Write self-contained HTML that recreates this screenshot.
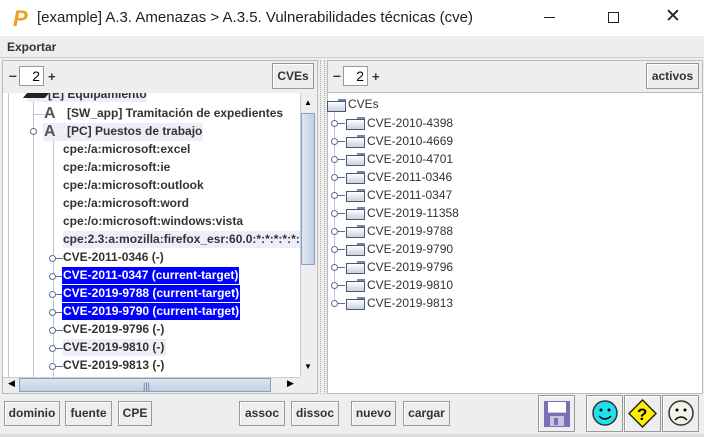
<!DOCTYPE html>
<html><head><meta charset="utf-8"><style>
*{margin:0;padding:0;box-sizing:border-box}
body{width:704px;height:437px;overflow:hidden;background:#eeeeee;font-family:"Liberation Sans",sans-serif;position:relative}
.a{position:absolute}
.t{font-size:12px;font-weight:bold;color:#333;white-space:nowrap;line-height:17px}
.btn{position:absolute;border:1px solid #999;background:#eee;font-size:12px;font-weight:bold;color:#333;text-align:center;line-height:22px;box-shadow:inset 1px 1px 0 #fff}
.sel{background:#0000ff;color:#fff;padding:0 1px}
.hl{background:#eeeef8}
.fold{position:absolute;width:19px;height:11px;border:1px solid #4a5a70;background:linear-gradient(#fff,#c8d2de)}
.fold:before{content:"";position:absolute;left:10px;top:-3px;width:8px;height:2px;background:#7088a8}
.k{position:absolute;width:7px;height:7px;border:1.5px solid #5a7090;border-radius:50%;background:#fff}
.kl{position:absolute;width:7px;height:1px;background:#5a7090}
</style></head><body>
<div class="a" style="left:0;top:0;width:704px;height:36px;background:#fff"></div>
<div class="a" style="left:13px;top:6px;font:bold italic 22px 'Liberation Sans';color:#f0a020">P</div>
<div class="a" style="left:37px;top:9px;font-size:15px;color:#222">[example] A.3. Amenazas &gt; A.3.5. Vulnerabilidades técnicas (cve)</div>
<div class="a" style="left:544px;top:17px;width:11px;height:1px;background:#222"></div>
<div class="a" style="left:608px;top:12px;width:11px;height:11px;border:1px solid #222"></div>
<div class="a" style="left:665px;top:5px;font-size:19px;color:#222">✕</div>
<div class="a" style="left:0;top:36px;width:704px;height:22px;background:#eee;border-bottom:1px solid #ccc"></div>
<div class="a t" style="left:7px;top:39px">Exportar</div>
<div class="a" style="left:2px;top:60px;width:316px;height:334px;border:1px solid #bbb;background:#eee"></div>
<div class="a t" style="left:9px;top:67px;font-size:14px">–</div>
<div class="a" style="left:19px;top:66px;width:25px;height:20px;background:#fff;border:1px solid #999;font-size:14px;text-align:right;padding-right:3px;line-height:18px">2</div>
<div class="a t" style="left:48px;top:68px;font-size:13px">+</div>
<div class="btn" style="left:272px;top:63px;width:42px;height:26px;line-height:24px">CVEs</div>
<div class="a" style="left:3px;top:93px;width:297px;height:284px;background:#fff;overflow:hidden">
<div class="a" style="left:5px;top:0;width:1px;height:284px;background:#b8c8dc"></div>
<div class="a" style="left:30px;top:8px;width:1px;height:276px;background:#b8c8dc"></div>
<div class="a" style="left:50px;top:40px;width:1px;height:244px;background:#b8c8dc"></div>
<div class="a hl" style="left:24px;top:-5px;width:120px;height:14px"></div>
<div class="a" style="left:22px;top:0;width:22px;height:5px;background:#222;transform:skewX(-40deg)"></div>
<div class="a t" style="left:45px;top:-7px">[E] Equipamiento</div>
<div class="a" style="left:30px;top:21px;width:12px;height:1px;background:#b8c8dc"></div>
<div class="a t" style="left:41px;top:12px;font-size:16px;color:#555">A</div>
<div class="a t" style="left:64px;top:12px">[SW_app] Tramitación de expedientes</div>
<div class="a hl" style="left:40px;top:30px;width:160px;height:18px"></div>
<div class="a t" style="left:41px;top:30px;font-size:16px;color:#555">A</div>
<div class="k" style="left:27px;top:35px"></div>
<div class="a t" style="left:64px;top:30px">[PC] Puestos de trabajo</div>
<div class="a t" style="left:60px;top:48px">cpe:/a:microsoft:excel</div>
<div class="a t" style="left:60px;top:66px">cpe:/a:microsoft:ie</div>
<div class="a t" style="left:60px;top:84px">cpe:/a:microsoft:outlook</div>
<div class="a t" style="left:60px;top:102px">cpe:/a:microsoft:word</div>
<div class="a t" style="left:60px;top:120px">cpe:/o:microsoft:windows:vista</div>
<div class="a t hl" style="left:60px;top:138px">cpe:2.3:a:mozilla:firefox_esr:60.0:*:*:*:*:*:*:*</div>
<div class="k" style="left:46px;top:162px"></div><div class="kl" style="left:53px;top:165px"></div>
<div class="k" style="left:46px;top:180px"></div><div class="kl" style="left:53px;top:183px"></div>
<div class="k" style="left:46px;top:198px"></div><div class="kl" style="left:53px;top:201px"></div>
<div class="k" style="left:46px;top:216px"></div><div class="kl" style="left:53px;top:219px"></div>
<div class="k" style="left:46px;top:234px"></div><div class="kl" style="left:53px;top:237px"></div>
<div class="k" style="left:46px;top:252px"></div><div class="kl" style="left:53px;top:255px"></div>
<div class="k" style="left:46px;top:270px"></div><div class="kl" style="left:53px;top:273px"></div>
<div class="a t" style="left:60px;top:156px">CVE-2011-0346 (-)</div>
<div class="a t sel" style="left:59px;top:174px">CVE-2011-0347 (current-target)</div>
<div class="a t sel" style="left:59px;top:192px">CVE-2019-9788 (current-target)</div>
<div class="a t sel" style="left:59px;top:210px">CVE-2019-9790 (current-target)</div>
<div class="a t" style="left:60px;top:228px">CVE-2019-9796 (-)</div>
<div class="a t hl" style="left:60px;top:246px;padding-right:2px">CVE-2019-9810 (-)</div>
<div class="a t" style="left:60px;top:264px">CVE-2019-9813 (-)</div>
</div>
<div class="a" style="left:300px;top:93px;width:16px;height:284px;background:#eee;border-left:1px solid #ccc"></div>
<div class="a" style="left:301px;top:113px;width:14px;height:152px;background:linear-gradient(90deg,#dde6f0,#c0d0e4);border:1px solid #8aa0c0"></div>
<div class="a" style="left:304px;top:98px;font-size:8px;color:#000">▲</div>
<div class="a" style="left:304px;top:362px;font-size:8px;color:#000">▼</div>
<div class="a" style="left:3px;top:377px;width:297px;height:16px;background:#eee;border-top:1px solid #ccc"></div>
<div class="a" style="left:19px;top:378px;width:252px;height:14px;background:linear-gradient(#dde6f0,#c0d0e4);border:1px solid #8aa0c0"></div>
<div class="a" style="left:8px;top:378px;font-size:9px">◀</div>
<div class="a" style="left:287px;top:378px;font-size:9px">▶</div>
<div class="a" style="left:143px;top:381px;font-size:9px;color:#668">|||</div>
<div class="a" style="left:320px;top:60px;width:5px;height:334px;border-left:1px dotted #aaa;border-right:1px dotted #aaa"></div>
<div class="a" style="left:327px;top:60px;width:376px;height:334px;border:1px solid #bbb;background:#fff"></div>
<div class="a" style="left:328px;top:61px;width:374px;height:32px;background:#eee;border-bottom:1px solid #bbb"></div>
<div class="a t" style="left:333px;top:67px;font-size:14px">–</div>
<div class="a" style="left:343px;top:66px;width:25px;height:20px;background:#fff;border:1px solid #999;font-size:14px;text-align:right;padding-right:3px;line-height:18px">2</div>
<div class="a t" style="left:372px;top:68px;font-size:13px">+</div>
<div class="btn" style="left:646px;top:63px;width:53px;height:26px;line-height:24px">activos</div>
<div class="a" style="left:334px;top:112px;width:1px;height:192px;background:#b8c8dc"></div>
<div class="fold" style="left:327px;top:101px"></div>
<div class="a" style="left:348px;top:96px;font-size:12px;color:#333;line-height:17px">CVEs</div>
<div id="r"></div>
<div class="btn" style="left:4px;top:401px;width:56px;height:25px">dominio</div>
<div class="btn" style="left:65px;top:401px;width:47px;height:25px">fuente</div>
<div class="btn" style="left:118px;top:401px;width:34px;height:25px">CPE</div>
<div class="btn" style="left:239px;top:401px;width:46px;height:25px">assoc</div>
<div class="btn" style="left:291px;top:401px;width:48px;height:25px">dissoc</div>
<div class="btn" style="left:351px;top:401px;width:45px;height:25px">nuevo</div>
<div class="btn" style="left:403px;top:401px;width:47px;height:25px">cargar</div>
<div class="btn" style="left:538px;top:395px;width:37px;height:37px"></div>
<div class="a" style="left:544px;top:401px;width:26px;height:26px;background:#7a70b8"></div>
<div class="a" style="left:548px;top:402px;width:18px;height:11px;background:#fff;border-bottom:1px solid #ccc"></div>
<div class="a" style="left:550px;top:416px;width:14px;height:10px;background:#c8c4e4"></div>
<div class="a" style="left:554px;top:418px;width:4px;height:7px;background:#7a70b8"></div>
<div class="btn" style="left:586px;top:395px;width:37px;height:37px"></div>
<svg class="a" style="left:591px;top:399px" width="28" height="28"><circle cx="14" cy="14" r="12" fill="#20e0f0" stroke="#333" stroke-width="1.5"/><circle cx="10" cy="11" r="1.5"/><circle cx="18" cy="11" r="1.5"/><path d="M8 17 Q14 23 20 17" stroke="#000" stroke-width="1.5" fill="none"/></svg>
<div class="btn" style="left:624px;top:395px;width:37px;height:37px"></div>
<svg class="a" style="left:628px;top:399px" width="29" height="29"><path d="M14.5 1 L28 14.5 L14.5 28 L1 14.5Z" fill="#ffee00" stroke="#222" stroke-width="1.5"/><text x="9" y="21" font-family="Liberation Sans" font-weight="bold" font-size="17">?</text></svg>
<div class="btn" style="left:662px;top:395px;width:37px;height:37px"></div>
<svg class="a" style="left:667px;top:399px" width="28" height="28"><circle cx="14" cy="14" r="12" fill="#f2f2e8" stroke="#333" stroke-width="1.5"/><circle cx="10" cy="11" r="1.5"/><circle cx="18" cy="11" r="1.5"/><path d="M8 21 Q14 15 20 21" stroke="#000" stroke-width="1.5" fill="none"/></svg>
<div class="a" style="left:0;top:434px;width:704px;height:3px;background:#ddd"></div>
<script>
var n=["CVE-2010-4398","CVE-2010-4669","CVE-2010-4701","CVE-2011-0346","CVE-2011-0347","CVE-2019-11358","CVE-2019-9788","CVE-2019-9790","CVE-2019-9796","CVE-2019-9810","CVE-2019-9813"],h="";
n.forEach(function(s,i){var y=115+i*18;
h+='<div class="k" style="left:331px;top:'+(y+5)+'px"></div><div class="kl" style="left:338px;top:'+(y+8)+'px"></div><div class="fold" style="left:346px;top:'+(y+4)+'px"></div><div class="a" style="left:367px;top:'+y+'px;font-size:12px;color:#333;line-height:17px">'+s+'</div>';});
document.getElementById("r").innerHTML=h;
</script>
</body></html>
